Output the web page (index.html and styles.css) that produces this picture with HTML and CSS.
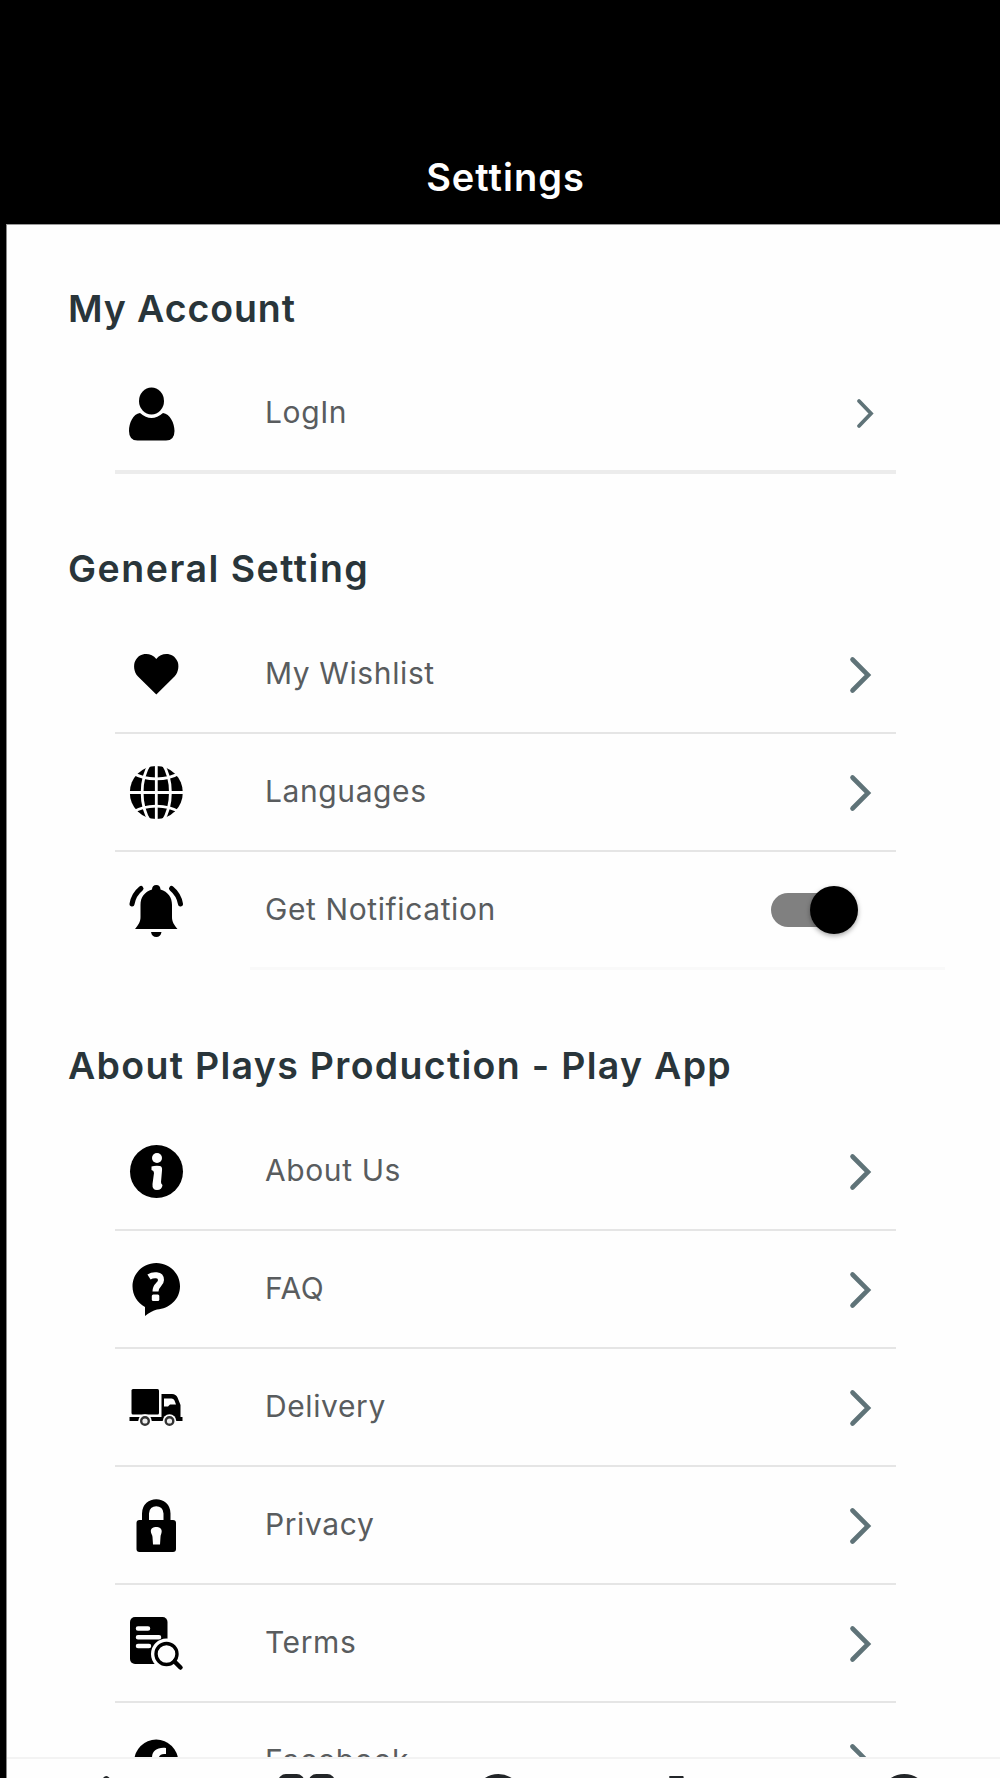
FILE: index.html
```html
<!DOCTYPE html>
<html lang="en">
<head>
    <meta charset="UTF-8">
    <meta name="viewport" content="width=device-width, initial-scale=1.0">
    <title>Settings</title>
    <link rel="stylesheet" href="styles.css">
</head>
<body>
    <header class="header">
        <h1>Settings</h1>
    </header>

    <div class="panel">
        <main class="content">
            <section class="first">
                <h2 class="h-account">My Account</h2>
                <div class="row thick">
                    <svg class="icon" viewBox="0 0 54 54">
                        <path d="M11 26 Q22.500 36 34 26 C41 27 45.500 36 45.500 44 Q45.500 53.500 37 53.500 H8.500 Q0 53.500 0 44 C0 36 4 27 11 26 Z"/>
                        <ellipse cx="22.500" cy="14" rx="12.500" ry="13.500"/>
                    </svg>
                    <span class="label">LogIn</span>
                    <svg class="chevron small" viewBox="0 0 40 40"><path d="M18 8 L30 20.500 L18 33"/></svg>
                </div>
            </section>

            <section>
                <h2 class="h-general">General Setting</h2>
                <div class="row">
                    <svg class="icon" viewBox="0 0 54 54">
                        <path d="M27.300 47.500 L9 29.500 C4.500 25 4.500 17.500 6 14.500 C10 5 22 5 27.300 12 C32.500 5 44.500 5 48.500 14.500 C50 17.500 50 25 45.500 29.500 Z"/>
                    </svg>
                    <span class="label">My Wishlist</span>
                    <svg class="chevron" viewBox="0 0 40 40"><path d="M11.500 5.500 L27 21 L11.500 36.500"/></svg>
                </div>
                <div class="row">
                    <svg class="icon" viewBox="0 0 54 54">
                        <circle cx="27.300" cy="27.500" r="26.500"/>
                        <g class="cut thin" transform="translate(0 0.5)">
                            <path d="M27.300 0 V54 M0 27 H54"/>
                            <path d="M21 -2 C10.500 14 10.500 40 21 56 M33.600 -2 C44 14 44 40 33.600 56"/>
                            <path d="M3 7 C17 15.500 37.500 15.500 51.500 7 M3 47 C17 38.500 37.500 38.500 51.500 47"/>
                        </g>
                    </svg>
                    <span class="label">Languages</span>
                    <svg class="chevron" viewBox="0 0 40 40"><path d="M11.500 5.500 L27 21 L11.500 36.500"/></svg>
                </div>
                <div class="row last">
                    <svg class="icon" viewBox="0 0 54 54">
                        <path d="M27.300 1 C30 1 31.500 3 31.500 5.500 C39 8 43 13 43 21 V33 C43 38 45 40.500 48.500 45 H6 C9.500 40.500 11.500 38 11.500 33 V21 C11.500 13 15.500 8 23 5.500 C23 3 24.500 1 27.300 1 Z"/>
                        <path d="M22 48 H32.500 C32 51.500 30 53 27.300 53 C24.500 53 22.500 51.500 22 48 Z"/>
                        <path class="line" d="M12 4.500 C6.500 9 4 14 3 20 M42.500 4.500 C48 9 50.500 14 51.500 20"/>
                    </svg>
                    <span class="label">Get Notification</span>
                    <span class="toggle"><span class="thumb"></span></span>
                </div>
                <div class="faint"></div>
            </section>

            <section>
                <h2 class="h-about">About Plays Production - Play App</h2>
                <div class="row">
                    <svg class="icon" viewBox="0 0 54 54">
                        <circle cx="27.500" cy="27.500" r="26.500"/>
                        <circle class="white" cx="28" cy="14" r="5"/>
                        <path class="white" d="M22.500 22.500 Q26 21.500 31 22 Q33.500 22.500 33 26.500 L32 38 Q32 40 33.500 41 Q33 46 28 46 Q23 46 23.500 40 L25 29 Q25 26.500 22.500 26 Z"/>
                    </svg>
                    <span class="label">About Us</span>
                    <svg class="chevron" viewBox="0 0 40 40"><path d="M11.500 5.500 L27 21 L11.500 36.500"/></svg>
                </div>
                <div class="row">
                    <svg class="icon" viewBox="0 0 54 54">
                        <path d="M27.300 1 C40.500 1 51 11.500 51 24.300 C51 37.500 40 47 28 47.500 C24 48.500 20 51 16 54 V45 C8.500 41 3.500 33.500 3.500 24.300 C3.500 11.500 14 1 27.300 1 Z"/>
                        <path class="cut mark" d="M20 15 C24 12.500 32 12 32 18 C32 23 26.500 22.500 26.500 29.500"/>
                        <rect class="white" x="22.800" y="32.500" width="7.500" height="6.500" rx="1.500"/>
                    </svg>
                    <span class="label">FAQ</span>
                    <svg class="chevron" viewBox="0 0 40 40"><path d="M11.500 5.500 L27 21 L11.500 36.500"/></svg>
                </div>
                <div class="row">
                    <svg class="icon" viewBox="0 0 54 54">
                        <rect x="2.500" y="9" width="27.500" height="25.500" rx="1.500"/>
                        <path d="M32.500 14 H43 Q47 14 48.500 17.500 L51.500 25 V37 H53.500 V41 H0.500 V37 H32.500 Z"/>
                        <path class="white" d="M35 18.500 H42.500 Q44.500 18.500 45.500 20.500 L47 24.500 H41 L39 26.500 H35 Z"/>
                        <circle class="white" cx="16" cy="41" r="6.800"/>
                        <circle class="white" cx="40.500" cy="41" r="6.800"/>
                        <circle class="wheel" cx="16" cy="41" r="3.800"/>
                        <circle class="wheel" cx="40.500" cy="41" r="3.800"/>
                    </svg>
                    <span class="label">Delivery</span>
                    <svg class="chevron" viewBox="0 0 40 40"><path d="M11.500 5.500 L27 21 L11.500 36.500"/></svg>
                </div>
                <div class="row">
                    <svg class="icon" viewBox="0 0 54 54">
                        <rect x="7.500" y="22" width="39.500" height="32" rx="3"/>
                        <path class="shackle" d="M16.500 25 V15.500 C16.500 1 38 1 38 15.500 V25"/>
                        <path class="white" d="M21.800 33 C21.800 27.500 32.700 27.500 32.700 33 C32.700 35.500 31.500 37 31.500 39 L31 46.500 H24 L23.500 39 C23.500 37 21.800 35.500 21.800 33 Z"/>
                    </svg>
                    <span class="label">Privacy</span>
                    <svg class="chevron" viewBox="0 0 40 40"><path d="M11.500 5.500 L27 21 L11.500 36.500"/></svg>
                </div>
                <div class="row">
                    <svg class="icon" viewBox="0 0 54 54">
                        <rect x="1" y="1" width="37.500" height="47" rx="5"/>
                        <path class="cut lines" d="M9 12.500 H19 M9 21.200 H30 M9 30 H20"/>
                        <circle class="white" cx="37.500" cy="38" r="15.500"/>
                        <circle class="lens" cx="37.500" cy="38" r="10.500"/>
                        <path class="handle" d="M45.500 45.500 L51.500 51.500"/>
                    </svg>
                    <span class="label">Terms</span>
                    <svg class="chevron" viewBox="0 0 40 40"><path d="M11.500 5.500 L27 21 L11.500 36.500"/></svg>
                </div>
                <div class="row">
                    <svg class="icon" viewBox="0 0 54 54">
                        <circle cx="27.200" cy="27.500" r="22"/>
                        <path class="white" d="M24 50 V29 H18 V24 H23 C23 17 28 13 37 14 V20 C33 19.500 31 20.500 30 23 H37 V29 H31 V50 Z"/>
                    </svg>
                    <span class="label">Facebook</span>
                    <svg class="chevron" viewBox="0 0 40 40"><path d="M11.500 5.500 L27 21 L11.500 36.500"/></svg>
                </div>
            </section>
        </main>

        <nav class="tabs">
            <svg viewBox="0 0 64 64"><path class="home" d="M6 28 L32 6.500 L58 28 V60 H6 Z"/></svg>
            <svg viewBox="0 0 64 64"><rect x="7.500" y="4.500" width="21" height="21" rx="5"/><rect x="38" y="4.500" width="21" height="21" rx="5"/></svg>
            <svg viewBox="0 0 64 64"><circle cx="27" cy="26" r="21.500"/></svg>
            <svg viewBox="0 0 64 64"><path d="M-1 6.500 H11 L18 38 H50"/></svg>
            <svg viewBox="0 0 64 64"><circle cx="36" cy="26" r="21.500"/></svg>
        </nav>
    </div>
</body>
</html>
```
FILE: styles.css
```css
* {
    box-sizing: border-box;
}

body {
    margin: 0;
    height: 1778px;
    background: #000;
    font-family: Inter, Roboto, sans-serif;
    display: flex;
    flex-direction: column;
    overflow: hidden;
}

.header {
    height: 224px;
    padding: 153px 0 0 11px;
    text-align: center;
}

h1 {
    margin: 0;
    color: #fff;
    font-size: 38px;
    font-weight: 600;
    line-height: 48px;
    letter-spacing: 1px;
}

.panel {
    flex: 1;
    min-height: 0;
    margin-left: 6px;
    background: #fefefe;
    border-left: 1px solid #888;
    border-top: 1px solid #999;
    display: flex;
    flex-direction: column;
}

.content {
    flex: 1;
    min-height: 0;
    overflow: hidden;
}

h2 {
    margin: 0;
    padding: 71.5px 0 23px 61px;
    color: #29353a;
    font-size: 37.5px;
    font-weight: 600;
    line-height: 48px;
    white-space: nowrap;
}

.first h2 {
    padding-top: 60px;
    padding-bottom: 22.5px;
}

h2.h-account {
    letter-spacing: 0.9px;
}

h2.h-general {
    letter-spacing: 1.5px;
}

h2.h-about {
    padding-top: 72px;
    padding-bottom: 22.5px;
    letter-spacing: 1.3px;
}

.row {
    display: flex;
    align-items: center;
    height: 118.1px;
    margin: 0 104px 0 108px;
    padding: 0 15px 1px 14px;
    border-bottom: 2px solid #e5e5e5;
}

.row.thick {
    padding-bottom: 0;
    border-bottom: 4px solid #ececec;
}

.row.last {
    height: 115.2px;
    padding-right: 53px;
    padding-bottom: 0;
    border-bottom: none;
}

.faint {
    height: 3px;
    margin: 0 55px 0 243px;
    background: #f9f9f9;
}

.label {
    flex: 1;
    margin-left: 82px;
    padding-bottom: 2px;
    color: #595c5e;
    font-size: 30px;
    letter-spacing: 0.6px;
}

.icon {
    width: 54px;
    height: 54px;
    overflow: visible;
}

.thick .icon,
.last .icon {
    margin-top: 2px;
}

.icon .white {
    fill: #fefefe;
}

.icon .cut {
    fill: none;
    stroke: #fefefe;
}

.icon .thin {
    stroke-width: 2.8;
}

.icon .mark {
    stroke-width: 6;
}

.icon .lines {
    stroke-width: 4.5;
    stroke-linecap: round;
}

.icon .line {
    fill: none;
    stroke: #000;
    stroke-width: 5;
    stroke-linecap: round;
}

.icon .wheel {
    fill: #eee;
    stroke: #333;
    stroke-width: 2.4;
}

.icon .shackle {
    fill: none;
    stroke: #000;
    stroke-width: 7;
}

.icon .lens,
.icon .handle {
    fill: none;
    stroke: #000;
    stroke-width: 3.4;
    stroke-linecap: round;
}

.icon .handle {
    stroke-width: 4.5;
}

.chevron {
    width: 40px;
    height: 40px;
    fill: none;
    stroke: #5f7378;
    stroke-width: 4.6;
    stroke-linecap: round;
}

.chevron.small {
    stroke-width: 3.8;
}

.toggle {
    width: 72px;
    height: 34px;
    border-radius: 17px;
    background: #808080;
    display: flex;
    align-items: center;
    justify-content: flex-end;
}

.thumb {
    flex: none;
    width: 48px;
    height: 48px;
    margin-right: -15px;
    border-radius: 50%;
    background: #000;
    box-shadow: 0 2px 5px rgba(0, 0, 0, 0.35);
}

.tabs {
    display: flex;
    height: 21px;
    padding-top: 13px;
    border-top: 2px solid #f3f3f3;
    overflow: hidden;
}

.tabs svg {
    flex: 1;
    height: 64px;
    overflow: visible;
    fill: none;
    stroke: #222528;
    stroke-width: 5;
}

.tabs .home {
    stroke-linejoin: round;
}
```
